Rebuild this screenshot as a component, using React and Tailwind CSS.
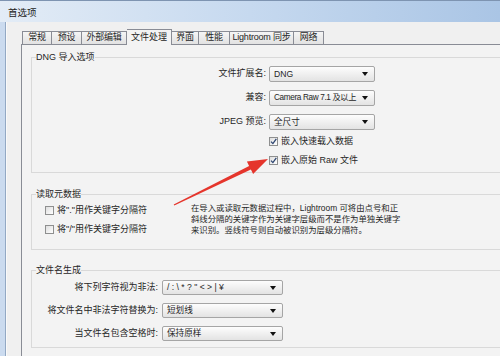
import React from "react"

const tabs = [
  { name: "常规", w: "w-[30px]" },
  { name: "预设", w: "w-[30px]" },
  { name: "外部编辑", w: "w-[45px]" },
  { name: "文件处理", w: "w-[45px]", active: true },
  { name: "界面", w: "w-[27px]" },
  { name: "性能", w: "w-[31px]" },
  { name: "Lightroom 同步", w: "w-[64px]" },
  { name: "网络", w: "w-[30px]" },
]

const dngRows = [
  ["文件扩展名:", "DNG"],
  ["兼容:", "Camera Raw 7.1 及以上", "text-[8.2px] tracking-[-0.35px]"],
  ["JPEG 预览:", "全尺寸"],
]

const nameRows = [
  ["将下列字符视为非法:", "/ : \\ * ? \" < > | ¥"],
  ["将文件名中非法字符替换为:", "短划线"],
  ["当文件名包含空格时:", "保持原样"],
]

function Select({ value, size, textCls = "text-[8.6px]" }) {
  return (
    <div
      className={`${size} flex items-center justify-between rounded-[2px] border border-[#a5a5a5] bg-linear-to-b from-[#fdfdfd] to-[#e3e3e3] pl-[4px] pr-[6px]`}
    >
      <span className={`whitespace-nowrap leading-none ${textCls}`}>{value}</span>
      <svg width="6" height="4" viewBox="0 0 6 4" className="shrink-0">
        <path d="M0 0h6L3 4z" fill="#111" />
      </svg>
    </div>
  )
}

function Check({ checked }) {
  return (
    <span className="flex h-[9px] w-[9px] shrink-0 items-center justify-center border border-[#8e8f8f] bg-linear-to-br from-[#dedede] to-[#ffffff]">
      {checked && (
        <svg width="7" height="7" viewBox="0 0 7 7">
          <path d="M1 3.6 L2.9 5.6 L6.3 0.8" stroke="#2c4470" strokeWidth="1.3" fill="none" />
        </svg>
      )}
    </span>
  )
}

function Group({ title, className, children }) {
  return (
    <fieldset className={`-mr-10 min-w-0 border border-[#d9d9d9] ${className}`}>
      <legend className="ml-[4px] leading-[12px]">{title}</legend>
      {children}
    </fieldset>
  )
}

export default function App() {
  return (
    <div className="relative flex h-[356px] w-[500px] flex-col overflow-hidden bg-[#f0f0f0] font-['Liberation_Sans','Noto_Sans_CJK_SC',sans-serif] text-[9px] text-[#262626]">
      <div className="flex h-[22px] shrink-0 items-center border-t border-[#7e94b1] bg-linear-to-r from-[#e3ecf6] via-[#c6d9ef] to-[#aac5e5] pl-[8px] pt-[3px] text-[9.5px] text-[#222]">
        首选项
      </div>

      <div className="flex min-h-0 flex-1">
        <div className="w-[7px] shrink-0 border-r border-[#fafafa] bg-[#cbdbef] shadow-[inset_-1px_0_0_#93a9c4]" />

        <div className="flex min-w-0 flex-1 flex-col pt-[7px]">
          <div className="flex h-[15px] items-end pl-[15px]">
            {tabs.map((t, i) =>
              t.active ? (
                <div
                  key={t.name}
                  className={`${t.w} relative z-10 -mb-px flex h-[16px] items-center justify-center border-t border-r border-[#898c95] bg-[#f3f3f3] whitespace-nowrap`}
                >
                  {t.name}
                </div>
              ) : (
                <div
                  key={t.name}
                  className={`${t.w} flex h-[13px] items-center justify-center border-t border-r border-[#898c95] bg-linear-to-b from-[#f5f5f5] to-[#e2e2e2] whitespace-nowrap tracking-[-0.2px] ${i === 0 ? "border-l" : ""}`}
                >
                  {t.name}
                </div>
              )
            )}
          </div>

          <div className="ml-[14px] flex-1 border-t border-l border-[#898c95] bg-[#f3f3f3] pt-[6px] pl-[9px]">
            <Group title="DNG 导入选项" className="pb-[2px]">
              <div className="mt-[3px] flex flex-col gap-[8px]">
                {dngRows.map(([label, value, cls]) => (
                  <div key={label} className="flex items-center">
                    <span className="w-[237px] pr-[3px] text-right whitespace-nowrap">{label}</span>
                    <Select value={value} size="h-[16px] w-[106px]" textCls={cls} />
                  </div>
                ))}
              </div>
              <div className="mt-[2px] flex flex-col">
                <div className="flex h-[19px] items-center gap-[3px] pl-[237px]">
                  <Check checked />
                  <span>嵌入快速载入数据</span>
                </div>
                <div className="flex h-[19px] items-center gap-[3px] pl-[237px]">
                  <Check checked />
                  <span>嵌入原始 Raw 文件</span>
                </div>
              </div>
            </Group>

            <Group title="读取元数据" className="mt-[15px] pb-[10px]">
              <div className="mt-[1px] grid grid-cols-[159px_1fr]">
                <div className="flex flex-col pl-[13px]">
                  <div className="flex h-[19px] items-center gap-[3px]">
                    <Check />
                    <span>将"."用作关键字分隔符</span>
                  </div>
                  <div className="flex h-[19px] items-center gap-[3px]">
                    <Check />
                    <span>将"/"用作关键字分隔符</span>
                  </div>
                </div>
                <p className="mt-[2px] whitespace-nowrap text-[8.4px] leading-[11px]">
                  在导入或读取元数据过程中，Lightroom 可将由点号和正
                  <br />
                  斜线分隔的关键字作为关键字层级而不是作为单独关键字
                  <br />
                  来识别。竖线符号则自动被识别为层级分隔符。
                </p>
              </div>
            </Group>

            <Group title="文件名生成" className="mt-[14px] pb-[6px]">
              <div className="mt-[4px] flex flex-col gap-[8px]">
                {nameRows.map(([label, value]) => (
                  <div key={label} className="flex items-center">
                    <span className="w-[130px] pr-[4px] text-right whitespace-nowrap">{label}</span>
                    <Select value={value} size="h-[15px] w-[121px]" />
                  </div>
                ))}
              </div>
            </Group>
          </div>
        </div>
      </div>

      <svg className="pointer-events-none absolute top-0 left-0" width="500" height="356">
        <polygon
          points="173.7,204.4 249.1,166 246.9,161.5 268,159 253.1,174.1 250.9,169.6 174.3,205.6"
          fill="#e5352c"
        />
      </svg>
    </div>
  )
}
